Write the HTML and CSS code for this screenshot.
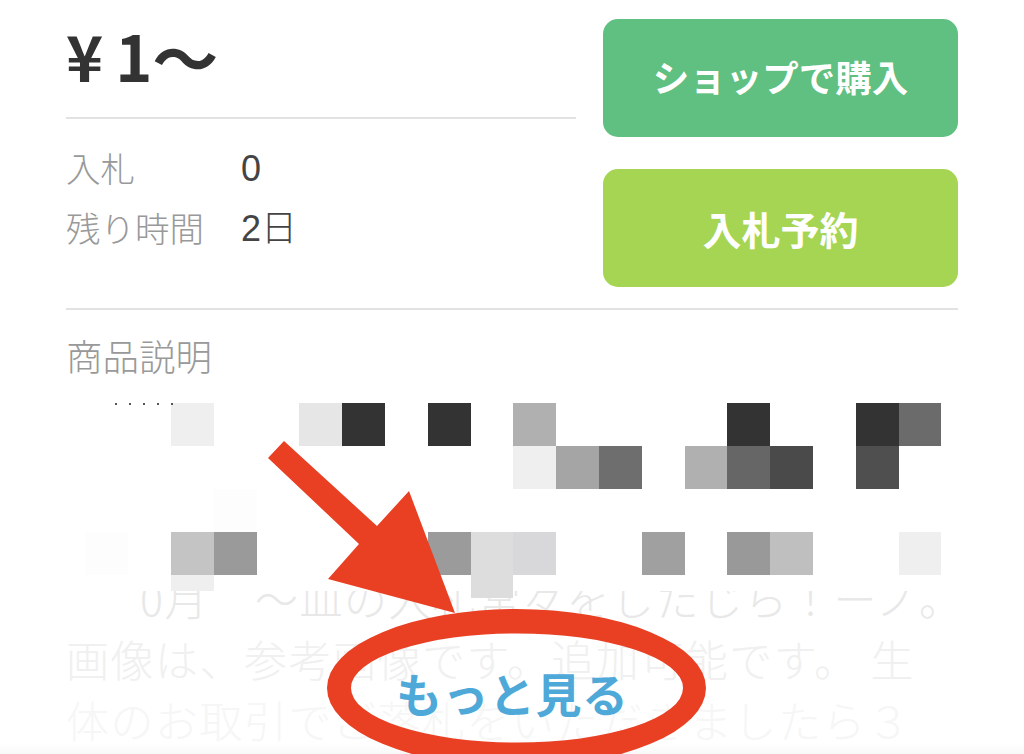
FILE: index.html
```html
<!DOCTYPE html>
<html lang="ja">
<head>
<meta charset="utf-8">
<title>商品</title>
<link rel="stylesheet" href="styles.css">
</head>
<body>
<main class="page">
  <section class="top">
    <div class="summary">
      <div class="price"><span class="yen">¥</span><span class="one">1</span><span class="wave">〜</span></div>
      <dl class="meta">
        <dt>入札</dt><dd>0</dd>
        <dt>残り時間</dt><dd>2日</dd>
      </dl>
    </div>
    <div class="actions">
      <a class="btn btn-shop">ショップで購入</a>
      <a class="btn btn-bid">入札予約</a>
    </div>
  </section>
  <section class="desc">
    <h2 class="desc-title">商品説明</h2>
    <div class="desc-body">
      <p class="line l1">0月<span class="gap"></span>〜皿の入札常々をしたじら！ーノ。</p>
      <p class="line l2">画像は、参考画像です。追加可能です。<span class="thin"></span>生</p>
      <p class="line l3">体のお取引でご落札をいただきましたら３</p>
    </div>
  </section>
  <div class="mosaic" aria-hidden="true">
    <i></i><i></i><i class="ee"></i><i></i><i></i><i class="e6"></i><i class="c3"></i><i></i><i class="c3"></i><i></i><i class="b0"></i><i></i><i></i><i></i><i></i><i class="c3"></i><i></i><i></i><i class="c3"></i><i class="c6b"></i>
    <i></i><i></i><i></i><i></i><i></i><i></i><i></i><i></i><i></i><i></i><i class="ee"></i><i class="a5"></i><i class="c6e"></i><i></i><i class="b0"></i><i class="c66"></i><i class="c4a"></i><i></i><i class="c4f"></i><i></i>
    <i></i><i></i><i></i><i class="fd"></i><i></i><i></i><i></i><i></i><i></i><i></i><i></i><i></i><i></i><i></i><i></i><i></i><i></i><i></i><i></i><i></i>
    <i class="fd"></i><i></i><i class="c4"></i><i class="c9a"></i><i></i><i></i><i></i><i></i><i class="c9b"></i><i class="dd"></i><i class="d8"></i><i></i><i></i><i class="a0"></i><i></i><i class="c99"></i><i class="bf"></i><i></i><i></i><i class="ee"></i>
    <i></i><i></i><i class="ee short"></i><i></i><i></i><i></i><i></i><i></i><i></i><i class="dd"></i>
  </div>
  <a class="more">もっと見る</a>
  <svg class="mark" viewBox="0 0 1024 754" aria-hidden="true">
    <path class="mark-fill" fill-rule="evenodd" d="M327 688a189.500 79 0 1 0 379 0a189.500 79 0 1 0-379 0ZM351 688a166 54.500 0 1 1 332 0a166 54.500 0 1 1-332 0Z"/>
    <polygon class="mark-fill" points="268,458 284,441 377,526 409,491 455,613 328,579 359,544"/>
  </svg>
</main>
</body>
</html>
```
FILE: styles.css
```css
* { box-sizing: border-box; }
html, body { margin: 0; padding: 0; background: #fff; }
body { font-family: "Noto Sans CJK JP", "Liberation Sans", sans-serif; color: #333; }
.page {
  position: relative;
  width: 1024px;
  height: 754px;
  overflow: hidden;
  padding: 19px 66px 0;
  background: linear-gradient(to bottom, #fff 744px, #f8f8f8 754px);
}
.top { display: flex; gap: 27px; height: 291px; border-bottom: 2px solid #e2e2e2; }
.summary { width: 510px; }
.price {
  display: flex;
  align-items: center;
  height: 100px;
  padding-bottom: 26px;
  border-bottom: 2px solid #e2e2e2;
  margin-bottom: 18px;
  font-size: 63px;
  font-weight: 700;
  line-height: 78px;
  color: #333;
}
.one { margin-left: 12px; }
.wave { margin-left: 0; font-size: 66px; }
.meta {
  display: grid;
  grid-template-columns: 175px 1fr;
  grid-auto-rows: 60px;
  margin: 0;
  font-size: 34.500px;
  line-height: 60px;
  font-weight: 300;
}
.meta dt { color: #999; }
.meta dd {
  margin: 0;
  padding-top: 2px;
  color: #444;
  font-family: "Liberation Sans", "Noto Sans CJK JP", sans-serif;
  font-size: 36px;
}
.actions { display: flex; flex-direction: column; gap: 32px; width: 355px; }
.btn {
  display: flex;
  align-items: center;
  justify-content: center;
  height: 118px;
  padding-bottom: 3px;
  border-radius: 15px;
  color: #fff;
  font-weight: 700;
}
.btn-shop { background: #5fc081; font-size: 36.500px; }
.btn-bid { background: #a5d553; font-size: 39px; padding-bottom: 1px; }
.desc-title {
  margin: 19px 0 0;
  font-size: 36.500px;
  font-weight: 300;
  line-height: 54px;
  color: #999;
}
.desc-body { margin-top: 184px; }
.line { margin: 0; font-size: 43px; font-weight: 300; line-height: 61px; letter-spacing: 1.500px; white-space: nowrap; }
.l1 { color: #e8e8e8; padding-left: 74px; }
.l2 { color: #f0f0f0; }
.l3 { color: #f6f6f6; }
.gap { display: inline-block; width: 46px; }
.thin { display: inline-block; width: 12px; }
.mosaic {
  position: absolute;
  left: 85.400px;
  top: 403px;
  width: 856px;
  display: grid;
  grid-template-columns: repeat(20, 42.800px);
  grid-template-rows: 43px 43px 43px 43px 23px;
  background: linear-gradient(#fff, #fff) no-repeat left top / 100% 188px;
}
.mosaic::before {
  content: "";
  position: absolute;
  left: 30px;
  top: 0;
  width: 62px;
  height: 2px;
  background: radial-gradient(circle at 1px 1px, #555 1px, transparent 1.500px) 0 0 / 14px 2px repeat-x;
}
.ee { background: #efefef; }
.e6 { background: #e6e6e6; }
.c3 { background: #333; }
.b0 { background: #b0b0b0; }
.c6b { background: #6b6b6b; }
.a5 { background: #a5a5a5; }
.c6e { background: #6e6e6e; }
.c66 { background: #666; }
.c4a { background: #4a4a4a; }
.c4f { background: #4f4f4f; }
.fd { background: #fdfdfd; }
.c4 { background: #c4c4c4; }
.c9a { background: #9a9a9a; }
.c9b { background: #9b9b9b; }
.dd { background: #dddddd; }
.d8 { background: #d8d8da; }
.a0 { background: #a0a0a0; }
.c99 { background: #999; }
.bf { background: #bfbfbf; }
.short { height: 16px; }
.more {
  position: absolute;
  left: 396px;
  top: 660px;
  font-size: 46px;
  line-height: 64px;
  letter-spacing: 0.500px;
  font-weight: 700;
  color: #4fa9d8;
  white-space: nowrap;
}
.mark { position: absolute; left: 0; top: 0; width: 1024px; height: 754px; }
.mark-fill { fill: #e94023; }
```
